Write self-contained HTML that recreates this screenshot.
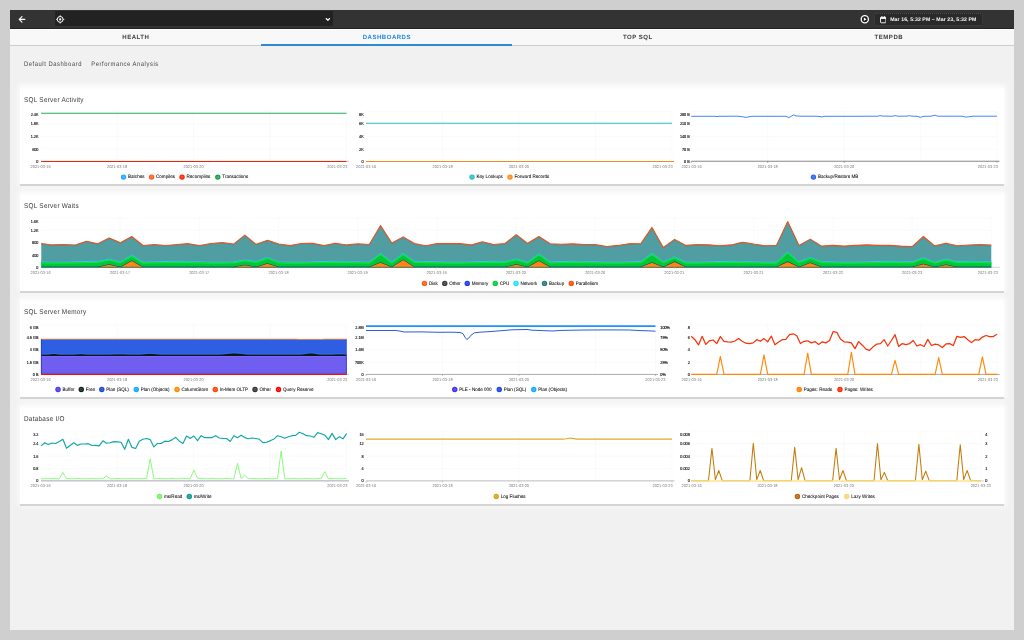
<!DOCTYPE html><html lang="en"><head><meta charset="utf-8"><title>SQL Server Dashboards</title><style>
*{box-sizing:border-box;text-rendering:geometricPrecision}
html,body{margin:0;padding:0}
body{width:1024px;height:640px;overflow:hidden;background:#cfcfcf;font-family:"Liberation Sans", Arial, sans-serif;position:relative}
#app{position:absolute;left:10px;top:10px;width:1004px;height:620px;background:#f1f1f1;overflow:hidden;will-change:transform}
#bar{position:absolute;left:0;top:0;width:1004px;height:18.6px;background:#333;border-bottom:1px solid #242424}
#sel{position:absolute;left:45px;top:.8px;width:278px;height:15.4px;background:#222}
#date{position:absolute;left:864.2px;top:2.8px;width:108.8px;height:13.2px;background:#2a2a2a;border:.5px dotted #4a4a4a;border-radius:2px;color:#fff;font-size:5.2px;font-weight:bold;line-height:12.6px;padding-left:15px;white-space:nowrap;letter-spacing:.08px}
#tabs{position:absolute;left:0;top:18.6px;width:1004px;height:17.2px;background:#f8f8f8;border-top:1.3px solid #fff;border-bottom:1px solid #cdcdcd;display:flex}
#tabs div{width:251px;text-align:center;font-size:6.05px;font-weight:bold;letter-spacing:.5px;color:#404040;line-height:16.6px;padding-left:.7px}
#tabs div.on{color:#1e88e5}
#ul{position:absolute;left:251px;top:33.8px;width:251px;height:2.3px;background:#2f8ad6}
#sub{position:absolute;left:14px;top:49.6px;font-size:6.5px;color:#484848;letter-spacing:.6px;white-space:nowrap;line-height:9px;transform:scaleX(.9);transform-origin:0 50%}
#sub span{margin-right:10.4px}
.panel{position:absolute;left:10px;width:984px;height:98.7px;background:linear-gradient(#f9f9f9,#fff 4px);box-shadow:0 1.6px .5px rgba(0,0,0,.15),0 0 5px 2.5px rgba(255,255,255,.8)}
.panel h3{position:absolute;left:4px;top:10.1px;margin:0;font-size:7px;font-weight:normal;color:#383838;letter-spacing:.3px;line-height:9px;white-space:nowrap;transform:scaleX(.91);transform-origin:0 50%}
.panel svg{position:absolute;left:0;top:0;overflow:visible}
svg text{font-family:"Liberation Sans", Arial, sans-serif}
.yl{font-size:4.35px;fill:#000;stroke:#000;stroke-width:.12px}
.xl{font-size:4.15px;fill:#7a7a7a}
.lg{font-size:4.9px;fill:#000;stroke:#000;stroke-width:.05px}
.g{stroke:#f5f5f5;stroke-width:.5}
</style></head><body>
<div id="app">
<div id="bar"><div id="sel"></div>
<svg style="position:absolute;left:0;top:0" width="1004" height="18" viewBox="10 10 1004 18"><path d="M24.8 19.4H19.5M22 16.6L19.2 19.4L22 22.2" fill="none" stroke="#fff" stroke-width="1.15" stroke-linecap="round" stroke-linejoin="round"/><circle cx="60.2" cy="19.4" r="2.9" fill="none" stroke="#fff" stroke-width="1"/><circle cx="60.2" cy="19.4" r="1.15" fill="#fff"/><path d="M60.2 15.3v1.4M60.2 22.1v1.4M56.1 19.4h1.4M62.9 19.4h1.4" stroke="#fff" stroke-width=".9"/><path d="M326.2 18.5L327.9 20.3L329.6 18.5" fill="none" stroke="#fff" stroke-width="1.1" stroke-linecap="round" stroke-linejoin="round"/><circle cx="864.8" cy="19.3" r="3.6" fill="#161616" stroke="#fff" stroke-width="1.3"/><path d="M863.8 17.5L866.6 19.3L863.8 21.1Z" fill="#fff"/></svg>
<div id="date">Mar 16, 5:32 PM &ndash; Mar 23, 5:32 PM<svg style="position:absolute;left:4.6px;top:2.5px" width="6.4" height="7.4" viewBox="0 0 6.4 7.4"><rect x=".5" y="1.2" width="5.4" height="5.6" rx=".7" fill="none" stroke="#fff" stroke-width=".9"/><rect x=".5" y="1.2" width="5.4" height="1.7" fill="#fff"/><path d="M1.9 .2v1.4M4.5 .2v1.4" stroke="#fff" stroke-width=".8"/></svg></div>
</div>
<div id="tabs"><div>HEALTH</div><div class="on">DASHBOARDS</div><div>TOP SQL</div><div>TEMPDB</div></div><div id="ul"></div>
<div id="sub"><span>Default Dashboard</span><span>Performance Analysis</span></div>
<div class="panel" style="top:76px;height:98.2px"><h3>SQL Server Activity</h3>
<svg width="984" height="98.2" viewBox="20 86 984 98.2"><line class="g" x1="41" x2="346.5" y1="124" y2="124"/><line class="g" x1="41" x2="346.5" y1="136.5" y2="136.5"/><line class="g" x1="41" x2="346.5" y1="149" y2="149"/><line class="g" x1="41" x2="346.5" y1="111.6" y2="111.6"/><line class="g" x1="117" x2="117" y1="111" y2="161.25"/><line class="g" x1="193.5" x2="193.5" y1="111" y2="161.25"/><line class="g" x1="270" x2="270" y1="111" y2="161.25"/><line class="g" x1="346.5" x2="346.5" y1="111" y2="161.25"/><line x1="41" x2="349" y1="161.25" y2="161.25" stroke="#aaa" stroke-width="0.6"/><text class="yl" transform="translate(38.4 116.15) scale(0.87 1)" text-anchor="end">2.4K</text><text class="yl" transform="translate(38.4 125.35) scale(0.87 1)" text-anchor="end">1.8K</text><text class="yl" transform="translate(38.4 138.05) scale(0.87 1)" text-anchor="end">1.2K</text><text class="yl" transform="translate(38.4 150.75) scale(0.87 1)" text-anchor="end">600</text><text class="yl" transform="translate(38.4 162.75) scale(0.87 1)" text-anchor="end">0</text><polyline fill="none" stroke="#22ae5c" stroke-width="1.1" stroke-linejoin="round"  points="41,113.2 346.5,113.2"/><polyline fill="none" stroke="#e9260c" stroke-width="1.1" stroke-linejoin="round"  points="41,161.45 346.5,161.45"/><text class="xl" transform="translate(30.5 167.75) scale(0.95 1)" text-anchor="start">2021-03-16</text><text class="xl" transform="translate(117 167.75) scale(0.95 1)" text-anchor="middle">2021-03-18</text><text class="xl" transform="translate(193.5 167.75) scale(0.95 1)" text-anchor="middle">2021-03-20</text><text class="xl" transform="translate(347.3 167.75) scale(0.95 1)" text-anchor="end">2021-03-23</text><circle cx="123.5" cy="177.1" r="2.7" fill="#1fa8fc"/><circle cx="123.5" cy="177.1" r="1.05" fill="none" stroke="#fff" stroke-opacity=".35" stroke-width=".6"/><text class="lg" transform="translate(128 178.35) scale(0.93 1)" text-anchor="start">Batches</text><circle cx="151.5" cy="177.1" r="2.7" fill="#ff5a1c"/><circle cx="151.5" cy="177.1" r="1.05" fill="none" stroke="#fff" stroke-opacity=".35" stroke-width=".6"/><text class="lg" transform="translate(156 178.35) scale(0.93 1)" text-anchor="start">Compiles</text><circle cx="182" cy="177.1" r="2.7" fill="#ff2200"/><circle cx="182" cy="177.1" r="1.05" fill="none" stroke="#fff" stroke-opacity=".35" stroke-width=".6"/><text class="lg" transform="translate(186.5 178.35) scale(0.93 1)" text-anchor="start">Recompiles</text><circle cx="217.75" cy="177.1" r="2.7" fill="#1a9e4c"/><circle cx="217.75" cy="177.1" r="1.05" fill="none" stroke="#fff" stroke-opacity=".35" stroke-width=".6"/><text class="lg" transform="translate(222.25 178.35) scale(0.93 1)" text-anchor="start">Transactions</text><line class="g" x1="366" x2="672" y1="124" y2="124"/><line class="g" x1="366" x2="672" y1="136.5" y2="136.5"/><line class="g" x1="366" x2="672" y1="149" y2="149"/><line class="g" x1="366" x2="672" y1="111.6" y2="111.6"/><line class="g" x1="442.5" x2="442.5" y1="111" y2="161.25"/><line class="g" x1="519" x2="519" y1="111" y2="161.25"/><line class="g" x1="595.5" x2="595.5" y1="111" y2="161.25"/><line class="g" x1="672" x2="672" y1="111" y2="161.25"/><text class="yl" transform="translate(363.7 116.25) scale(0.87 1)" text-anchor="end">8K</text><text class="yl" transform="translate(363.7 125.15) scale(0.87 1)" text-anchor="end">6K</text><text class="yl" transform="translate(363.7 138.05) scale(0.87 1)" text-anchor="end">4K</text><text class="yl" transform="translate(363.7 150.75) scale(0.87 1)" text-anchor="end">2K</text><text class="yl" transform="translate(363.7 162.75) scale(0.87 1)" text-anchor="end">0</text><polyline fill="none" stroke="#20bfc0" stroke-width="1.1" stroke-linejoin="round"  points="366,123.2 672,123.2"/><polyline fill="none" stroke="#f08a24" stroke-width="1.05" stroke-linejoin="round"  points="366,161.45 674,161.45"/><text class="xl" transform="translate(356 167.75) scale(0.95 1)" text-anchor="start">2021-03-16</text><text class="xl" transform="translate(442.5 167.75) scale(0.95 1)" text-anchor="middle">2021-03-18</text><text class="xl" transform="translate(519 167.75) scale(0.95 1)" text-anchor="middle">2021-03-20</text><text class="xl" transform="translate(672.6 167.75) scale(0.95 1)" text-anchor="end">2021-03-23</text><circle cx="472" cy="177.1" r="2.7" fill="#25c0c4"/><circle cx="472" cy="177.1" r="1.05" fill="none" stroke="#fff" stroke-opacity=".35" stroke-width=".6"/><text class="lg" transform="translate(476.5 178.35) scale(0.93 1)" text-anchor="start">Key Lookups</text><circle cx="510" cy="177.1" r="2.7" fill="#ff8c1a"/><circle cx="510" cy="177.1" r="1.05" fill="none" stroke="#fff" stroke-opacity=".35" stroke-width=".6"/><text class="lg" transform="translate(514.5 178.35) scale(0.93 1)" text-anchor="start">Forward Records</text><line class="g" x1="691.25" x2="997" y1="124" y2="124"/><line class="g" x1="691.25" x2="997" y1="136.5" y2="136.5"/><line class="g" x1="691.25" x2="997" y1="149" y2="149"/><line class="g" x1="691.25" x2="997" y1="111.6" y2="111.6"/><line class="g" x1="767.75" x2="767.75" y1="111" y2="161.25"/><line class="g" x1="844.25" x2="844.25" y1="111" y2="161.25"/><line class="g" x1="920.75" x2="920.75" y1="111" y2="161.25"/><line class="g" x1="997" x2="997" y1="111" y2="161.25"/><line x1="691.25" x2="999.5" y1="161.25" y2="161.25" stroke="#555" stroke-width="0.7"/><line x1="691.25" x2="691.25" y1="161.25" y2="162.85" stroke="#555" stroke-width=".5"/><line x1="767.75" x2="767.75" y1="161.25" y2="162.85" stroke="#555" stroke-width=".5"/><line x1="844.25" x2="844.25" y1="161.25" y2="162.85" stroke="#555" stroke-width=".5"/><line x1="997" x2="997" y1="161.25" y2="162.85" stroke="#555" stroke-width=".5"/><text class="yl" transform="translate(689.8 116.25) scale(0.87 1)" text-anchor="end">280 B</text><text class="yl" transform="translate(689.8 125.35) scale(0.87 1)" text-anchor="end">210 B</text><text class="yl" transform="translate(689.8 138.05) scale(0.87 1)" text-anchor="end">140 B</text><text class="yl" transform="translate(689.8 150.75) scale(0.87 1)" text-anchor="end">70 B</text><text class="yl" transform="translate(689.8 162.75) scale(0.87 1)" text-anchor="end">0 B</text><polyline fill="none" stroke="#4285f4" stroke-width="1.0" stroke-linejoin="round"  points="691.25,116.3 715,116.3 717,116.6 719,116.3 738,116.2 744,117 746,117.4 748,117 752,116.3 786,116.3 789,117.6 791.5,116.2 793.5,114.9 796,115.9 800,116.2 818,116.3 822,116.9 825,116.3 860,116.3 878,116.2 880,115.6 883,116.1 893,116.2 895,115.6 898,116.2 906,116.2 909.5,115.7 912,116.2 917,116.3 920.5,117.3 924,116.3 931,116.2 935,115.2 938,116.2 962,116.2 966,117.1 969,116.8 973,116.2 997,116.2"/><text class="xl" transform="translate(681.5 167.75) scale(0.95 1)" text-anchor="start">2021-03-16</text><text class="xl" transform="translate(767.75 167.75) scale(0.95 1)" text-anchor="middle">2021-03-18</text><text class="xl" transform="translate(844.25 167.75) scale(0.95 1)" text-anchor="middle">2021-03-20</text><text class="xl" transform="translate(998 167.75) scale(0.95 1)" text-anchor="end">2021-03-23</text><circle cx="813.5" cy="177.1" r="2.7" fill="#2a63f6"/><circle cx="813.5" cy="177.1" r="1.05" fill="none" stroke="#fff" stroke-opacity=".35" stroke-width=".6"/><text class="lg" transform="translate(818 178.35) scale(0.93 1)" text-anchor="start">Backup/Restore MB</text></svg></div>
<div class="panel" style="top:182.2px;height:98.6px"><h3>SQL Server Waits</h3>
<svg width="984" height="98.6" viewBox="20 192.2 984 98.6"><line class="g" x1="41.25" x2="991.3" y1="230.5" y2="230.5"/><line class="g" x1="41.25" x2="991.3" y1="243" y2="243"/><line class="g" x1="41.25" x2="991.3" y1="255.5" y2="255.5"/><line class="g" x1="41.25" x2="991.3" y1="218" y2="218"/><line class="g" x1="120" x2="120" y1="217.5" y2="267.5"/><line class="g" x1="199.2" x2="199.2" y1="217.5" y2="267.5"/><line class="g" x1="278.5" x2="278.5" y1="217.5" y2="267.5"/><line class="g" x1="357.7" x2="357.7" y1="217.5" y2="267.5"/><line class="g" x1="436.9" x2="436.9" y1="217.5" y2="267.5"/><line class="g" x1="516.1" x2="516.1" y1="217.5" y2="267.5"/><line class="g" x1="595.3" x2="595.3" y1="217.5" y2="267.5"/><line class="g" x1="674.5" x2="674.5" y1="217.5" y2="267.5"/><line class="g" x1="753.7" x2="753.7" y1="217.5" y2="267.5"/><line class="g" x1="833" x2="833" y1="217.5" y2="267.5"/><line class="g" x1="912.2" x2="912.2" y1="217.5" y2="267.5"/><line class="g" x1="991.3" x2="991.3" y1="217.5" y2="267.5"/><line x1="41.25" x2="1000" y1="267.5" y2="267.5" stroke="#bbb" stroke-width="0.6"/><text class="yl" transform="translate(38.4 223.05) scale(0.87 1)" text-anchor="end">1.6K</text><text class="yl" transform="translate(38.4 232.15) scale(0.87 1)" text-anchor="end">1.2K</text><text class="yl" transform="translate(38.4 244.55) scale(0.87 1)" text-anchor="end">800</text><text class="yl" transform="translate(38.4 257.05) scale(0.87 1)" text-anchor="end">400</text><text class="yl" transform="translate(38.4 268.95) scale(0.87 1)" text-anchor="end">0</text><polygon fill="#509ea1" points="41.25,243.6 52.56,245 63.87,244.7 75.18,245.2 86.49,241.25 97.8,243.9 109.11,238 120.42,242.8 131.73,236.6 143.04,245.6 154.35,244.7 165.66,245.6 176.97,244.7 188.28,243.75 199.59,245.7 210.9,243.6 222.21,242.7 233.52,244.2 244.83,235.3 256.14,244.4 267.45,240.3 278.76,244.2 290.07,245.5 301.38,243.6 312.69,243.4 324,245.6 335.31,243.4 346.62,245 357.93,243.9 369.24,244.7 380.55,225.6 391.86,243.1 403.17,237 414.48,243.6 425.79,245.9 437.1,243.6 448.41,243.75 459.72,243.75 471.03,245 482.34,241.9 493.65,244.7 504.96,243.6 516.27,234.8 527.59,243.4 538.9,236.6 550.21,243.9 561.52,244.4 572.83,244 584.14,244.7 595.45,244.7 606.76,246.6 618.07,245.5 629.38,243.75 640.69,243.9 652,227.5 663.31,247.5 674.62,239.5 685.93,245.5 697.24,244.7 708.55,245 719.86,245.8 731.17,245 742.48,242.3 753.79,244.2 765.1,245.8 776.41,245.5 787.72,221.6 799.03,245.5 810.34,239.2 821.65,246.25 832.96,245.5 844.27,246.25 855.58,245.5 866.89,245 878.2,245.5 889.51,245.5 900.82,246.25 912.13,246.7 923.44,236.6 934.75,245.9 946.06,243.4 957.37,245.9 968.68,245.2 979.99,244.7 991.3,245.2 991.3,267.5 41.25,267.5"/><polygon fill="#19e0d8" points="41.25,261.4 52.56,261.67 63.87,261.74 75.18,261.55 86.49,261.25 97.8,261.06 109.11,258.75 120.42,261.41 131.73,254.8 143.04,261.74 154.35,261.54 165.66,261.24 176.97,261.06 188.28,261.13 199.59,261.41 210.9,261.68 222.21,261.74 233.52,261.54 244.83,259.5 256.14,261.06 267.45,256.9 278.76,261.42 290.07,261.68 301.38,261.74 312.69,261.53 324,261.23 335.31,261.05 346.62,261.14 357.93,261.42 369.24,261.69 380.55,253 391.86,261.53 403.17,253 414.48,261.05 425.79,261.15 437.1,261.43 448.41,261.69 459.72,261.73 471.03,261.52 482.34,261.22 493.65,261.05 504.96,261.15 516.27,258.4 527.59,261.69 538.9,253.3 550.21,261.52 561.52,261.21 572.83,261.05 584.14,261.15 595.45,261.44 606.76,261.7 618.07,261.73 629.38,261.51 640.69,261.21 652,253 663.31,261.16 674.62,256.4 685.93,261.7 697.24,261.73 708.55,261.51 719.86,261.2 731.17,261.05 742.48,261.16 753.79,261.45 765.1,261.7 776.41,261.72 787.72,251.4 799.03,261.2 810.34,256.9 821.65,261.17 832.96,261.46 844.27,261.71 855.58,261.72 866.89,261.49 878.2,261.19 889.51,261.05 900.82,261.17 912.13,261.46 923.44,257.2 934.75,261.72 946.06,258.75 957.37,261.19 968.68,261.05 979.99,261.17 991.3,261.47 991.3,267.5 41.25,267.5"/><polygon fill="#00c736" points="41.25,262.3 52.56,262.57 63.87,262.64 75.18,262.45 86.49,262.15 97.8,261.96 109.11,259.65 120.42,262.31 131.73,255.7 143.04,262.64 154.35,262.44 165.66,262.14 176.97,261.96 188.28,262.03 199.59,262.31 210.9,262.58 222.21,262.64 233.52,262.44 244.83,260.4 256.14,261.96 267.45,257.8 278.76,262.32 290.07,262.58 301.38,262.64 312.69,262.43 324,262.13 335.31,261.95 346.62,262.04 357.93,262.32 369.24,262.59 380.55,253.9 391.86,262.43 403.17,253.9 414.48,261.95 425.79,262.05 437.1,262.33 448.41,262.59 459.72,262.63 471.03,262.42 482.34,262.12 493.65,261.95 504.96,262.05 516.27,259.3 527.59,262.59 538.9,254.2 550.21,262.42 561.52,262.11 572.83,261.95 584.14,262.05 595.45,262.34 606.76,262.6 618.07,262.63 629.38,262.41 640.69,262.11 652,253.9 663.31,262.06 674.62,257.3 685.93,262.6 697.24,262.63 708.55,262.41 719.86,262.1 731.17,261.95 742.48,262.06 753.79,262.35 765.1,262.6 776.41,262.62 787.72,252.3 799.03,262.1 810.34,257.8 821.65,262.07 832.96,262.36 844.27,262.61 855.58,262.62 866.89,262.39 878.2,262.09 889.51,261.95 900.82,262.07 912.13,262.36 923.44,258.1 934.75,262.62 946.06,259.65 957.37,262.09 968.68,261.95 979.99,262.07 991.3,262.37 991.3,267.5 41.25,267.5"/><polyline fill="none" stroke="#12de52" stroke-width="1.3" stroke-linejoin="round"  points="41.25,263 52.56,263.27 63.87,263.34 75.18,263.15 86.49,262.85 97.8,262.66 109.11,260.35 120.42,263.01 131.73,256.4 143.04,263.34 154.35,263.14 165.66,262.84 176.97,262.66 188.28,262.73 199.59,263.01 210.9,263.28 222.21,263.34 233.52,263.14 244.83,261.1 256.14,262.66 267.45,258.5 278.76,263.02 290.07,263.28 301.38,263.34 312.69,263.13 324,262.83 335.31,262.65 346.62,262.74 357.93,263.02 369.24,263.29 380.55,254.6 391.86,263.13 403.17,254.6 414.48,262.65 425.79,262.75 437.1,263.03 448.41,263.29 459.72,263.33 471.03,263.12 482.34,262.82 493.65,262.65 504.96,262.75 516.27,260 527.59,263.29 538.9,254.9 550.21,263.12 561.52,262.81 572.83,262.65 584.14,262.75 595.45,263.04 606.76,263.3 618.07,263.33 629.38,263.11 640.69,262.81 652,254.6 663.31,262.76 674.62,258 685.93,263.3 697.24,263.33 708.55,263.11 719.86,262.8 731.17,262.65 742.48,262.76 753.79,263.05 765.1,263.3 776.41,263.32 787.72,253 799.03,262.8 810.34,258.5 821.65,262.77 832.96,263.06 844.27,263.31 855.58,263.32 866.89,263.09 878.2,262.79 889.51,262.65 900.82,262.77 912.13,263.06 923.44,258.8 934.75,263.32 946.06,260.35 957.37,262.79 968.68,262.65 979.99,262.77 991.3,263.07"/><polygon fill="#16307a" points="41.25,266.95 52.56,266.95 63.87,266.95 75.18,266.95 86.49,266.95 97.8,266.95 109.11,264.35 120.42,266.95 131.73,260.75 143.04,266.95 154.35,266.95 165.66,266.95 176.97,266.95 188.28,266.95 199.59,266.95 210.9,266.95 222.21,266.95 233.52,266.95 244.83,264.95 256.14,266.95 267.45,263.45 278.76,266.95 290.07,266.95 301.38,266.95 312.69,266.95 324,266.95 335.31,266.95 346.62,266.95 357.93,266.95 369.24,266.95 380.55,262.35 391.86,266.95 403.17,259.65 414.48,266.95 425.79,266.95 437.1,266.95 448.41,266.95 459.72,266.95 471.03,266.95 482.34,266.95 493.65,266.95 504.96,266.95 516.27,264.35 527.59,266.95 538.9,260.75 550.21,266.95 561.52,266.95 572.83,266.95 584.14,266.95 595.45,266.95 606.76,266.95 618.07,266.95 629.38,266.95 640.69,266.95 652,262.35 663.31,266.95 674.62,261.55 685.93,266.95 697.24,266.95 708.55,266.95 719.86,266.95 731.17,266.95 742.48,266.95 753.79,266.95 765.1,266.95 776.41,266.95 787.72,261.55 799.03,266.95 810.34,262.75 821.65,266.95 832.96,266.95 844.27,266.95 855.58,266.95 866.89,266.95 878.2,266.95 889.51,266.95 900.82,266.95 912.13,266.95 923.44,263.85 934.75,266.95 946.06,264.65 957.37,266.95 968.68,266.95 979.99,266.95 991.3,266.95 991.3,267.5 41.25,267.5"/><polygon fill="#ff8412" points="41.25,267.5 52.56,267.5 63.87,267.5 75.18,267.5 86.49,267.5 97.8,267.5 109.11,264.9 120.42,267.5 131.73,261.3 143.04,267.5 154.35,267.5 165.66,267.5 176.97,267.5 188.28,267.5 199.59,267.5 210.9,267.5 222.21,267.5 233.52,267.5 244.83,265.5 256.14,267.5 267.45,264 278.76,267.5 290.07,267.5 301.38,267.5 312.69,267.5 324,267.5 335.31,267.5 346.62,267.5 357.93,267.5 369.24,267.5 380.55,262.9 391.86,267.5 403.17,260.2 414.48,267.5 425.79,267.5 437.1,267.5 448.41,267.5 459.72,267.5 471.03,267.5 482.34,267.5 493.65,267.5 504.96,267.5 516.27,264.9 527.59,267.5 538.9,261.3 550.21,267.5 561.52,267.5 572.83,267.5 584.14,267.5 595.45,267.5 606.76,267.5 618.07,267.5 629.38,267.5 640.69,267.5 652,262.9 663.31,267.5 674.62,262.1 685.93,267.5 697.24,267.5 708.55,267.5 719.86,267.5 731.17,267.5 742.48,267.5 753.79,267.5 765.1,267.5 776.41,267.5 787.72,262.1 799.03,267.5 810.34,263.3 821.65,267.5 832.96,267.5 844.27,267.5 855.58,267.5 866.89,267.5 878.2,267.5 889.51,267.5 900.82,267.5 912.13,267.5 923.44,264.4 934.75,267.5 946.06,265.2 957.37,267.5 968.68,267.5 979.99,267.5 991.3,267.5 991.3,267.5 41.25,267.5"/><polyline fill="none" stroke="#3d97a3" stroke-width="0.7" stroke-linejoin="round"  points="41.25,244.55 52.56,245.95 63.87,245.65 75.18,246.15 86.49,242.2 97.8,244.85 109.11,238.95 120.42,243.75 131.73,237.55 143.04,246.55 154.35,245.65 165.66,246.55 176.97,245.65 188.28,244.7 199.59,246.65 210.9,244.55 222.21,243.65 233.52,245.15 244.83,236.25 256.14,245.35 267.45,241.25 278.76,245.15 290.07,246.45 301.38,244.55 312.69,244.35 324,246.55 335.31,244.35 346.62,245.95 357.93,244.85 369.24,245.65 380.55,226.55 391.86,244.05 403.17,237.95 414.48,244.55 425.79,246.85 437.1,244.55 448.41,244.7 459.72,244.7 471.03,245.95 482.34,242.85 493.65,245.65 504.96,244.55 516.27,235.75 527.59,244.35 538.9,237.55 550.21,244.85 561.52,245.35 572.83,244.95 584.14,245.65 595.45,245.65 606.76,247.55 618.07,246.45 629.38,244.7 640.69,244.85 652,228.45 663.31,248.45 674.62,240.45 685.93,246.45 697.24,245.65 708.55,245.95 719.86,246.75 731.17,245.95 742.48,243.25 753.79,245.15 765.1,246.75 776.41,246.45 787.72,222.55 799.03,246.45 810.34,240.15 821.65,247.2 832.96,246.45 844.27,247.2 855.58,246.45 866.89,245.95 878.2,246.45 889.51,246.45 900.82,247.2 912.13,247.65 923.44,237.55 934.75,246.85 946.06,244.35 957.37,246.85 968.68,246.15 979.99,245.65 991.3,246.15"/><polyline fill="none" stroke="#f4501a" stroke-width="1.05" stroke-linejoin="round"  points="41.25,243.7 52.56,245.1 63.87,244.8 75.18,245.3 86.49,241.35 97.8,244 109.11,238.1 120.42,242.9 131.73,236.7 143.04,245.7 154.35,244.8 165.66,245.7 176.97,244.8 188.28,243.85 199.59,245.8 210.9,243.7 222.21,242.8 233.52,244.3 244.83,235.4 256.14,244.5 267.45,240.4 278.76,244.3 290.07,245.6 301.38,243.7 312.69,243.5 324,245.7 335.31,243.5 346.62,245.1 357.93,244 369.24,244.8 380.55,225.7 391.86,243.2 403.17,237.1 414.48,243.7 425.79,246 437.1,243.7 448.41,243.85 459.72,243.85 471.03,245.1 482.34,242 493.65,244.8 504.96,243.7 516.27,234.9 527.59,243.5 538.9,236.7 550.21,244 561.52,244.5 572.83,244.1 584.14,244.8 595.45,244.8 606.76,246.7 618.07,245.6 629.38,243.85 640.69,244 652,227.6 663.31,247.6 674.62,239.6 685.93,245.6 697.24,244.8 708.55,245.1 719.86,245.9 731.17,245.1 742.48,242.4 753.79,244.3 765.1,245.9 776.41,245.6 787.72,221.7 799.03,245.6 810.34,239.3 821.65,246.35 832.96,245.6 844.27,246.35 855.58,245.6 866.89,245.1 878.2,245.6 889.51,245.6 900.82,246.35 912.13,246.8 923.44,236.7 934.75,246 946.06,243.5 957.37,246 968.68,245.3 979.99,244.8 991.3,245.3"/><polyline fill="none" stroke="#6d7fd6" stroke-width="0.45" stroke-linejoin="round"  points="41.25,261.2 52.56,261.47 63.87,261.54 75.18,261.35 86.49,261.05 97.8,260.86 109.11,258.55 120.42,261.21 131.73,254.6 143.04,261.54 154.35,261.34 165.66,261.04 176.97,260.86 188.28,260.93 199.59,261.21 210.9,261.48 222.21,261.54 233.52,261.34 244.83,259.3 256.14,260.86 267.45,256.7 278.76,261.22 290.07,261.48 301.38,261.54 312.69,261.33 324,261.03 335.31,260.85 346.62,260.94 357.93,261.22 369.24,261.49 380.55,252.8 391.86,261.33 403.17,252.8 414.48,260.85 425.79,260.95 437.1,261.23 448.41,261.49 459.72,261.53 471.03,261.32 482.34,261.02 493.65,260.85 504.96,260.95 516.27,258.2 527.59,261.49 538.9,253.1 550.21,261.32 561.52,261.01 572.83,260.85 584.14,260.95 595.45,261.24 606.76,261.5 618.07,261.53 629.38,261.31 640.69,261.01 652,252.8 663.31,260.96 674.62,256.2 685.93,261.5 697.24,261.53 708.55,261.31 719.86,261 731.17,260.85 742.48,260.96 753.79,261.25 765.1,261.5 776.41,261.52 787.72,251.2 799.03,261 810.34,256.7 821.65,260.97 832.96,261.26 844.27,261.51 855.58,261.52 866.89,261.29 878.2,260.99 889.51,260.85 900.82,260.97 912.13,261.26 923.44,257 934.75,261.52 946.06,258.55 957.37,260.99 968.68,260.85 979.99,260.97 991.3,261.27"/><polyline fill="none" stroke="#1b4a4a" stroke-width="0.45" stroke-linejoin="round"  points="41.25,267.45 991.3,267.45"/><line x1="120" x2="120" y1="267.5" y2="269.1" stroke="#bbb" stroke-width=".5"/><line x1="199.2" x2="199.2" y1="267.5" y2="269.1" stroke="#bbb" stroke-width=".5"/><line x1="278.5" x2="278.5" y1="267.5" y2="269.1" stroke="#bbb" stroke-width=".5"/><line x1="357.7" x2="357.7" y1="267.5" y2="269.1" stroke="#bbb" stroke-width=".5"/><line x1="436.9" x2="436.9" y1="267.5" y2="269.1" stroke="#bbb" stroke-width=".5"/><line x1="516.1" x2="516.1" y1="267.5" y2="269.1" stroke="#bbb" stroke-width=".5"/><line x1="595.3" x2="595.3" y1="267.5" y2="269.1" stroke="#bbb" stroke-width=".5"/><line x1="674.5" x2="674.5" y1="267.5" y2="269.1" stroke="#bbb" stroke-width=".5"/><line x1="753.7" x2="753.7" y1="267.5" y2="269.1" stroke="#bbb" stroke-width=".5"/><line x1="833" x2="833" y1="267.5" y2="269.1" stroke="#bbb" stroke-width=".5"/><line x1="912.2" x2="912.2" y1="267.5" y2="269.1" stroke="#bbb" stroke-width=".5"/><line x1="991.3" x2="991.3" y1="267.5" y2="269.1" stroke="#bbb" stroke-width=".5"/><text class="xl" transform="translate(30.5 273.85) scale(0.95 1)" text-anchor="start">2021-03-16</text><text class="xl" transform="translate(120 273.85) scale(0.95 1)" text-anchor="middle">2021-03-17</text><text class="xl" transform="translate(199.2 273.85) scale(0.95 1)" text-anchor="middle">2021-03-17</text><text class="xl" transform="translate(278.5 273.85) scale(0.95 1)" text-anchor="middle">2021-03-18</text><text class="xl" transform="translate(357.5 273.85) scale(0.95 1)" text-anchor="middle">2021-03-19</text><text class="xl" transform="translate(436.7 273.85) scale(0.95 1)" text-anchor="middle">2021-03-19</text><text class="xl" transform="translate(516 273.85) scale(0.95 1)" text-anchor="middle">2021-03-20</text><text class="xl" transform="translate(595.2 273.85) scale(0.95 1)" text-anchor="middle">2021-03-20</text><text class="xl" transform="translate(674.4 273.85) scale(0.95 1)" text-anchor="middle">2021-03-21</text><text class="xl" transform="translate(753.7 273.85) scale(0.95 1)" text-anchor="middle">2021-03-21</text><text class="xl" transform="translate(833 273.85) scale(0.95 1)" text-anchor="middle">2021-03-22</text><text class="xl" transform="translate(912.2 273.85) scale(0.95 1)" text-anchor="middle">2021-03-23</text><text class="xl" transform="translate(998 273.85) scale(0.95 1)" text-anchor="end">2021-03-23</text><circle cx="424.5" cy="283.6" r="2.7" fill="#ff5f0a"/><circle cx="424.5" cy="283.6" r="1.05" fill="none" stroke="#fff" stroke-opacity=".35" stroke-width=".6"/><text class="lg" transform="translate(429 284.85) scale(0.93 1)" text-anchor="start">Disk</text><circle cx="444.75" cy="283.6" r="2.7" fill="#3a3a3a"/><circle cx="444.75" cy="283.6" r="1.05" fill="none" stroke="#fff" stroke-opacity=".35" stroke-width=".6"/><text class="lg" transform="translate(449.25 284.85) scale(0.93 1)" text-anchor="start">Other</text><circle cx="467.25" cy="283.6" r="2.7" fill="#1a35e8"/><circle cx="467.25" cy="283.6" r="1.05" fill="none" stroke="#fff" stroke-opacity=".35" stroke-width=".6"/><text class="lg" transform="translate(471.75 284.85) scale(0.93 1)" text-anchor="start">Memory</text><circle cx="495.25" cy="283.6" r="2.7" fill="#00cc33"/><circle cx="495.25" cy="283.6" r="1.05" fill="none" stroke="#fff" stroke-opacity=".35" stroke-width=".6"/><text class="lg" transform="translate(499.75 284.85) scale(0.93 1)" text-anchor="start">CPU</text><circle cx="516" cy="283.6" r="2.7" fill="#19e6ff"/><circle cx="516" cy="283.6" r="1.05" fill="none" stroke="#fff" stroke-opacity=".35" stroke-width=".6"/><text class="lg" transform="translate(520.5 284.85) scale(0.93 1)" text-anchor="start">Network</text><circle cx="544.5" cy="283.6" r="2.7" fill="#2b7a80"/><circle cx="544.5" cy="283.6" r="1.05" fill="none" stroke="#fff" stroke-opacity=".35" stroke-width=".6"/><text class="lg" transform="translate(549 284.85) scale(0.93 1)" text-anchor="start">Backup</text><circle cx="571.25" cy="283.6" r="2.7" fill="#ff4a00"/><circle cx="571.25" cy="283.6" r="1.05" fill="none" stroke="#fff" stroke-opacity=".35" stroke-width=".6"/><text class="lg" transform="translate(575.75 284.85) scale(0.93 1)" text-anchor="start">Parallelism</text></svg></div>
<div class="panel" style="top:288.4px;height:98.9px"><h3>SQL Server Memory</h3>
<svg width="984" height="98.9" viewBox="20 298.4 984 98.9"><g transform="translate(0 0.6)"><line class="g" x1="41" x2="346.6" y1="324.9" y2="324.9"/><line class="g" x1="41" x2="346.6" y1="337.1" y2="337.1"/><line class="g" x1="41" x2="346.6" y1="349.5" y2="349.5"/><line class="g" x1="41" x2="346.6" y1="361.9" y2="361.9"/><line class="g" x1="117" x2="117" y1="324.5" y2="374.25"/><line class="g" x1="193.5" x2="193.5" y1="324.5" y2="374.25"/><line class="g" x1="270" x2="270" y1="324.5" y2="374.25"/><line class="g" x1="346.5" x2="346.5" y1="324.5" y2="374.25"/><text class="yl" transform="translate(38.4 329.15) scale(0.87 1)" text-anchor="end">6 GB</text><text class="yl" transform="translate(38.4 338.55) scale(0.87 1)" text-anchor="end">4.5 GB</text><text class="yl" transform="translate(38.4 351.05) scale(0.87 1)" text-anchor="end">3 GB</text><text class="yl" transform="translate(38.4 363.55) scale(0.87 1)" text-anchor="end">1.5 GB</text><text class="yl" transform="translate(38.4 375.75) scale(0.87 1)" text-anchor="end">0 B</text><polygon fill="#2e5ee2" points="41,339 44.64,339 48.28,339 51.91,339 55.55,339 59.19,339 62.83,339 66.47,339 70.1,339 73.74,339 77.38,339 81.02,339 84.66,339 88.3,339 91.93,339 95.57,339 99.21,339 102.85,339 106.49,339 110.12,339 113.76,339 117.4,339 121.04,339 124.68,339 128.31,339 131.95,339 135.59,339 139.23,339 142.87,339 146.5,339 150.14,339 153.78,339 157.42,339 161.06,339 164.7,339 168.33,339 171.97,339 175.61,339 179.25,339 182.89,339 186.52,339 190.16,339 193.8,339 197.44,339 201.08,339 204.71,339 208.35,339 211.99,339 215.63,339 219.27,339 222.9,339 226.54,339 230.18,339 233.82,339 237.46,339 241.1,339 244.73,339 248.37,339 252.01,339 255.65,339 259.29,339 262.92,339 266.56,339 270.2,339 273.84,339 277.48,339 281.11,339 284.75,339 288.39,339 292.03,339 295.67,339 299.3,339.25 302.94,339.25 306.58,339.25 310.22,339.25 313.86,339.25 317.5,339.25 321.13,339.25 324.77,339 328.41,339 332.05,339 335.69,339 339.32,339 342.96,339 346.6,339 346.6,374.25 41,374.25"/><polygon fill="#07190f" points="41,354.35 44.64,354.35 48.28,354.26 51.91,353.82 55.55,353.75 59.19,354.22 62.83,354.34 66.47,354.35 70.1,354.34 73.74,354.26 77.38,354.01 81.02,353.92 84.66,354.16 88.3,354.32 91.93,354.35 95.57,354.35 99.21,354.35 102.85,354.33 106.49,354.3 110.12,354.24 113.76,354.15 117.4,354.07 121.04,354.05 124.68,354.11 128.31,354.2 131.95,354.28 135.59,354.31 139.23,354.27 142.87,354.07 146.5,353.73 150.14,353.55 153.78,353.75 157.42,354.09 161.06,354.28 164.7,354.34 168.33,354.35 171.97,354.35 175.61,354.35 179.25,354.35 182.89,354.35 186.52,354.35 190.16,354.35 193.8,354.35 197.44,354.35 201.08,354.35 204.71,354.35 208.35,354.35 211.99,354.35 215.63,354.33 219.27,354.26 222.9,354.07 226.54,353.7 230.18,353.26 233.82,353.05 237.46,353.23 241.1,353.65 244.73,354.04 248.37,354.25 252.01,354.33 255.65,354.35 259.29,354.35 262.92,354.35 266.56,354.35 270.2,354.35 273.84,354.35 277.48,354.35 281.11,354.35 284.75,354.35 288.39,354.35 292.03,354.35 295.67,354.35 299.3,354.32 302.94,354.14 306.58,353.59 310.22,353.07 313.86,353.31 317.5,353.95 321.13,354.27 324.77,354.34 328.41,354.34 332.05,354.28 335.69,354.11 339.32,353.96 342.96,354.04 346.6,354.23 346.6,374.25 41,374.25"/><polygon fill="#705ef0" points="41,355.9 44.64,355.9 48.28,355.9 51.91,355.9 55.55,355.9 59.19,355.9 62.83,355.9 66.47,355.9 70.1,355.9 73.74,355.9 77.38,355.9 81.02,355.9 84.66,355.9 88.3,355.9 91.93,355.9 95.57,355.9 99.21,355.9 102.85,355.9 106.49,355.9 110.12,355.9 113.76,355.9 117.4,355.9 121.04,355.9 124.68,355.9 128.31,355.9 131.95,355.9 135.59,355.9 139.23,355.9 142.87,355.9 146.5,355.9 150.14,355.9 153.78,355.9 157.42,355.9 161.06,355.9 164.7,355.9 168.33,355.9 171.97,355.9 175.61,355.9 179.25,355.9 182.89,355.9 186.52,355.9 190.16,355.9 193.8,355.9 197.44,355.9 201.08,355.9 204.71,355.9 208.35,355.9 211.99,355.9 215.63,355.9 219.27,355.9 222.9,355.9 226.54,355.9 230.18,355.9 233.82,355.9 237.46,355.9 241.1,355.9 244.73,355.9 248.37,355.9 252.01,355.9 255.65,355.9 259.29,355.9 262.92,355.9 266.56,355.9 270.2,355.9 273.84,355.9 277.48,355.9 281.11,355.9 284.75,355.9 288.39,355.9 292.03,355.9 295.67,355.9 299.3,355.9 302.94,355.9 306.58,355.9 310.22,355.9 313.86,355.9 317.5,355.9 321.13,355.9 324.77,355.9 328.41,355.9 332.05,355.9 335.69,355.9 339.32,355.9 342.96,355.9 346.6,355.9 346.6,374.25 41,374.25"/><polyline fill="none" stroke="#3f6efc" stroke-width="0.6" stroke-linejoin="round"  points="41,354 44.64,354 48.28,353.91 51.91,353.47 55.55,353.4 59.19,353.87 62.83,353.99 66.47,354 70.1,353.99 73.74,353.91 77.38,353.66 81.02,353.57 84.66,353.81 88.3,353.97 91.93,354 95.57,354 99.21,354 102.85,353.98 106.49,353.95 110.12,353.89 113.76,353.8 117.4,353.72 121.04,353.7 124.68,353.76 128.31,353.85 131.95,353.93 135.59,353.96 139.23,353.92 142.87,353.72 146.5,353.38 150.14,353.2 153.78,353.4 157.42,353.74 161.06,353.93 164.7,353.99 168.33,354 171.97,354 175.61,354 179.25,354 182.89,354 186.52,354 190.16,354 193.8,354 197.44,354 201.08,354 204.71,354 208.35,354 211.99,354 215.63,353.98 219.27,353.91 222.9,353.72 226.54,353.35 230.18,352.91 233.82,352.7 237.46,352.88 241.1,353.3 244.73,353.69 248.37,353.9 252.01,353.98 255.65,354 259.29,354 262.92,354 266.56,354 270.2,354 273.84,354 277.48,354 281.11,354 284.75,354 288.39,354 292.03,354 295.67,354 299.3,353.97 302.94,353.79 306.58,353.24 310.22,352.72 313.86,352.96 317.5,353.6 321.13,353.92 324.77,353.99 328.41,353.99 332.05,353.93 335.69,353.76 339.32,353.61 342.96,353.69 346.6,353.88"/><polyline fill="none" stroke="#8b6efc" stroke-width="0.6" stroke-linejoin="round"  points="41,356.3 346.6,356.3"/><polyline fill="none" stroke="#3a62f2" stroke-width="0.8" stroke-linejoin="round"  points="41,373 346.6,373"/><polyline fill="none" stroke="#e0742a" stroke-width="0.8" stroke-linejoin="round"  points="41,339 44.64,339 48.28,339 51.91,339 55.55,339 59.19,339 62.83,339 66.47,339 70.1,339 73.74,339 77.38,339 81.02,339 84.66,339 88.3,339 91.93,339 95.57,339 99.21,339 102.85,339 106.49,339 110.12,339 113.76,339 117.4,339 121.04,339 124.68,339 128.31,339 131.95,339 135.59,339 139.23,339 142.87,339 146.5,339 150.14,339 153.78,339 157.42,339 161.06,339 164.7,339 168.33,339 171.97,339 175.61,339 179.25,339 182.89,339 186.52,339 190.16,339 193.8,339 197.44,339 201.08,339 204.71,339 208.35,339 211.99,339 215.63,339 219.27,339 222.9,339 226.54,339 230.18,339 233.82,339 237.46,339 241.1,339 244.73,339 248.37,339 252.01,339 255.65,339 259.29,339 262.92,339 266.56,339 270.2,339 273.84,339 277.48,339 281.11,339 284.75,339 288.39,339 292.03,339 295.67,339 299.3,339.25 302.94,339.25 306.58,339.25 310.22,339.25 313.86,339.25 317.5,339.25 321.13,339.25 324.77,339 328.41,339 332.05,339 335.69,339 339.32,339 342.96,339 346.6,339"/><polyline fill="none" stroke="#1530d8" stroke-width="0.7" stroke-linejoin="round"  points="41.3,339 41.3,374.25"/><polyline fill="none" stroke="#3a4ae6" stroke-width="0.6" stroke-linejoin="round"  points="346.3,339 346.3,374.25"/><polyline fill="none" stroke="#ff0a0a" stroke-width="1.3" stroke-linejoin="round"  points="41,374.25 346.6,374.25"/><line x1="346.6" x2="349" y1="374.25" y2="374.25" stroke="#999" stroke-width="0.5"/><text class="xl" transform="translate(30.5 380.55) scale(0.95 1)" text-anchor="start">2021-03-16</text><text class="xl" transform="translate(117 380.55) scale(0.95 1)" text-anchor="middle">2021-03-18</text><text class="xl" transform="translate(193.5 380.55) scale(0.95 1)" text-anchor="middle">2021-03-20</text><text class="xl" transform="translate(347.3 380.55) scale(0.95 1)" text-anchor="end">2021-03-23</text><circle cx="58" cy="389.25" r="2.7" fill="#4a35f0"/><circle cx="58" cy="389.25" r="1.05" fill="none" stroke="#fff" stroke-opacity=".35" stroke-width=".6"/><text class="lg" transform="translate(62.5 390.5) scale(0.93 1)" text-anchor="start">Buffer</text><circle cx="81.25" cy="389.25" r="2.7" fill="#0c2415"/><circle cx="81.25" cy="389.25" r="1.05" fill="none" stroke="#fff" stroke-opacity=".35" stroke-width=".6"/><text class="lg" transform="translate(85.75 390.5) scale(0.93 1)" text-anchor="start">Free</text><circle cx="101.75" cy="389.25" r="2.7" fill="#1a45e0"/><circle cx="101.75" cy="389.25" r="1.05" fill="none" stroke="#fff" stroke-opacity=".35" stroke-width=".6"/><text class="lg" transform="translate(106.25 390.5) scale(0.93 1)" text-anchor="start">Plan (SQL)</text><circle cx="136.25" cy="389.25" r="2.7" fill="#12aaff"/><circle cx="136.25" cy="389.25" r="1.05" fill="none" stroke="#fff" stroke-opacity=".35" stroke-width=".6"/><text class="lg" transform="translate(140.75 390.5) scale(0.93 1)" text-anchor="start">Plan (Objects)</text><circle cx="177" cy="389.25" r="2.7" fill="#ff8a00"/><circle cx="177" cy="389.25" r="1.05" fill="none" stroke="#fff" stroke-opacity=".35" stroke-width=".6"/><text class="lg" transform="translate(181.5 390.5) scale(0.93 1)" text-anchor="start">ColumnStore</text><circle cx="215.25" cy="389.25" r="2.7" fill="#ff4500"/><circle cx="215.25" cy="389.25" r="1.05" fill="none" stroke="#fff" stroke-opacity=".35" stroke-width=".6"/><text class="lg" transform="translate(219.75 390.5) scale(0.93 1)" text-anchor="start">In-Mem OLTP</text><circle cx="255" cy="389.25" r="2.7" fill="#333"/><circle cx="255" cy="389.25" r="1.05" fill="none" stroke="#fff" stroke-opacity=".35" stroke-width=".6"/><text class="lg" transform="translate(259.5 390.5) scale(0.93 1)" text-anchor="start">Other</text><circle cx="278.5" cy="389.25" r="2.7" fill="#ff0000"/><circle cx="278.5" cy="389.25" r="1.05" fill="none" stroke="#fff" stroke-opacity=".35" stroke-width=".6"/><text class="lg" transform="translate(283 390.5) scale(0.93 1)" text-anchor="start">Query Reserve</text><line class="g" x1="366" x2="655.5" y1="324.9" y2="324.9"/><line class="g" x1="366" x2="655.5" y1="337.1" y2="337.1"/><line class="g" x1="366" x2="655.5" y1="349.5" y2="349.5"/><line class="g" x1="366" x2="655.5" y1="361.9" y2="361.9"/><line class="g" x1="442.5" x2="442.5" y1="324.5" y2="374.25"/><line class="g" x1="519" x2="519" y1="324.5" y2="374.25"/><line class="g" x1="595.5" x2="595.5" y1="324.5" y2="374.25"/><line class="g" x1="655.5" x2="655.5" y1="324.5" y2="374.25"/><line x1="366" x2="658" y1="374.25" y2="374.25" stroke="#888" stroke-width="0.7"/><line x1="366" x2="366" y1="374.25" y2="375.85" stroke="#888" stroke-width=".5"/><line x1="442.5" x2="442.5" y1="374.25" y2="375.85" stroke="#888" stroke-width=".5"/><line x1="519" x2="519" y1="374.25" y2="375.85" stroke="#888" stroke-width=".5"/><line x1="655.5" x2="655.5" y1="374.25" y2="375.85" stroke="#888" stroke-width=".5"/><text class="yl" transform="translate(363.7 329.15) scale(0.87 1)" text-anchor="end">2.8M</text><text class="yl" transform="translate(363.7 338.55) scale(0.87 1)" text-anchor="end">2.1M</text><text class="yl" transform="translate(363.7 351.05) scale(0.87 1)" text-anchor="end">1.4M</text><text class="yl" transform="translate(363.7 363.55) scale(0.87 1)" text-anchor="end">700K</text><text class="yl" transform="translate(363.7 375.75) scale(0.87 1)" text-anchor="end">0</text><text class="yl" transform="translate(660.3 329.15) scale(0.87 1)" text-anchor="start">100%</text><text class="yl" transform="translate(660.3 338.55) scale(0.87 1)" text-anchor="start">75%</text><text class="yl" transform="translate(660.3 351.05) scale(0.87 1)" text-anchor="start">50%</text><text class="yl" transform="translate(660.3 363.55) scale(0.87 1)" text-anchor="start">25%</text><text class="yl" transform="translate(660.3 375.75) scale(0.87 1)" text-anchor="start">0%</text><polyline fill="none" stroke="#1e90ff" stroke-width="1.9" stroke-linejoin="round"  points="366,325.9 655.5,325.9"/><polyline fill="none" stroke="#2a5bd8" stroke-width="1.0" stroke-linejoin="round"  points="366,330.3 396,330.3 400,330.9 404,331.8 420,331.7 440,332.1 452,332 460,332.3 463,333.5 465,337 466.8,339.3 468.5,338.2 471,335 474.5,332.6 480,332 490,331.4 500,330.6 512,329.6 527,329.3 532,330 540,330.3 552,330.8 562,330.2 587,329.8 610,329.7 629.5,329.8 640,330.4 648,330.6 655.5,331"/><text class="xl" transform="translate(356 380.55) scale(0.95 1)" text-anchor="start">2021-03-16</text><text class="xl" transform="translate(442.5 380.55) scale(0.95 1)" text-anchor="middle">2021-03-18</text><text class="xl" transform="translate(519 380.55) scale(0.95 1)" text-anchor="middle">2021-03-20</text><text class="xl" transform="translate(655.4 380.55) scale(0.95 1)" text-anchor="middle">2021-03-23</text><circle cx="454.75" cy="389.25" r="2.7" fill="#3d2df5"/><circle cx="454.75" cy="389.25" r="1.05" fill="none" stroke="#fff" stroke-opacity=".35" stroke-width=".6"/><text class="lg" transform="translate(459.25 390.5) scale(0.93 1)" text-anchor="start">PLE - Node 000</text><circle cx="499.25" cy="389.25" r="2.7" fill="#1a45e0"/><circle cx="499.25" cy="389.25" r="1.05" fill="none" stroke="#fff" stroke-opacity=".35" stroke-width=".6"/><text class="lg" transform="translate(503.75 390.5) scale(0.93 1)" text-anchor="start">Plan (SQL)</text><circle cx="533.75" cy="389.25" r="2.7" fill="#12aaff"/><circle cx="533.75" cy="389.25" r="1.05" fill="none" stroke="#fff" stroke-opacity=".35" stroke-width=".6"/><text class="lg" transform="translate(538.25 390.5) scale(0.93 1)" text-anchor="start">Plan (Objects)</text><line class="g" x1="691.25" x2="997" y1="324.9" y2="324.9"/><line class="g" x1="691.25" x2="997" y1="337.1" y2="337.1"/><line class="g" x1="691.25" x2="997" y1="349.5" y2="349.5"/><line class="g" x1="691.25" x2="997" y1="361.9" y2="361.9"/><line class="g" x1="767.75" x2="767.75" y1="324.5" y2="374.25"/><line class="g" x1="844.25" x2="844.25" y1="324.5" y2="374.25"/><line class="g" x1="920.75" x2="920.75" y1="324.5" y2="374.25"/><line class="g" x1="997" x2="997" y1="324.5" y2="374.25"/><line x1="691.25" x2="999.7" y1="374.25" y2="374.25" stroke="#888" stroke-width="0.7"/><text class="yl" transform="translate(689.8 329.15) scale(0.87 1)" text-anchor="end">8</text><text class="yl" transform="translate(689.8 338.55) scale(0.87 1)" text-anchor="end">6</text><text class="yl" transform="translate(689.8 351.05) scale(0.87 1)" text-anchor="end">4</text><text class="yl" transform="translate(689.8 363.55) scale(0.87 1)" text-anchor="end">2</text><text class="yl" transform="translate(689.8 375.75) scale(0.87 1)" text-anchor="end">0</text><polyline fill="none" stroke="#f4350a" stroke-width="1.25" stroke-linejoin="round"  points="691.25,336.1 694.89,339.5 698.53,344.7 702.17,336.1 705.81,344.2 709.45,340.6 713.09,339.8 716.73,343.4 720.37,336.4 724.01,341.1 727.65,341.7 731.29,341.9 734.93,340.8 738.57,338.4 742.21,341.1 745.85,343 749.49,343.4 753.13,342.7 756.77,339.5 760.41,341.1 764.05,338.4 767.69,341.6 771.33,335.9 774.97,344.5 778.61,341.9 782.25,339.5 785.89,339.1 789.53,334.5 793.17,333.6 796.81,335.6 800.45,343.4 804.09,341.1 807.73,340.6 811.37,342.7 815.01,341.4 818.65,344.2 822.29,341.6 825.93,342.7 829.57,340.3 833.21,331.4 836.85,332.2 840.49,338.75 844.12,341.6 847.76,342 851.4,342.7 855.04,348.4 858.68,341.4 862.32,345 865.96,348.9 869.6,350.2 873.24,346.6 876.88,343.9 880.52,343.4 884.16,339.5 887.8,345.8 891.44,340.3 895.08,334.5 898.72,346.25 902.36,343.4 906,344.5 909.64,343.4 913.28,340.3 916.92,345.8 920.56,344.5 924.2,346.25 927.84,339.2 931.48,345.3 935.12,343.9 938.76,344.7 942.4,347.3 946.04,343.75 949.68,343.4 953.32,345.3 956.96,336.1 960.6,337.2 964.24,336.4 967.88,339.5 971.52,342.3 975.16,339.5 978.8,340 982.44,336.9 986.08,335.3 989.72,336.4 993.36,336.4 997,334"/><polyline fill="none" stroke="#ff8a0a" stroke-width="1.15" stroke-linejoin="round"  points="691.25,374.15 694.89,374.15 698.53,374.15 702.17,374.15 705.81,374.15 709.45,374.15 713.09,374.15 716.73,374.15 720.37,356.15 724.01,374.15 727.65,374.15 731.29,374.15 734.93,374.15 738.57,374.15 742.21,374.15 745.85,374.15 749.49,374.15 753.13,374.15 756.77,374.15 760.41,374.15 764.05,354.6 767.69,374.15 771.33,374.15 774.97,374.15 778.61,374.15 782.25,374.15 785.89,374.15 789.53,374.15 793.17,374.15 796.81,374.15 800.45,374.15 804.09,374.15 807.73,353 811.37,374.15 815.01,374.15 818.65,374.15 822.29,374.15 825.93,374.15 829.57,374.15 833.21,374.15 836.85,374.15 840.49,374.15 844.12,374.15 847.76,374.15 851.4,352.2 855.04,374.15 858.68,374.15 862.32,374.15 865.96,374.15 869.6,374.15 873.24,374.15 876.88,374.15 880.52,374.15 884.16,374.15 887.8,374.15 891.44,374.15 895.08,360.2 898.72,374.15 902.36,374.15 906,374.15 909.64,374.15 913.28,374.15 916.92,374.15 920.56,374.15 924.2,374.15 927.84,374.15 931.48,374.15 935.12,374.15 938.76,357.4 942.4,374.15 946.04,374.15 949.68,374.15 953.32,374.15 956.96,374.15 960.6,374.15 964.24,374.15 967.88,374.15 971.52,374.15 975.16,374.15 978.8,374.15 982.44,356.6 986.08,374.15 989.72,374.15 993.36,374.15 997,374.15"/><text class="xl" transform="translate(681.5 380.55) scale(0.95 1)" text-anchor="start">2021-03-16</text><text class="xl" transform="translate(767.75 380.55) scale(0.95 1)" text-anchor="middle">2021-03-18</text><text class="xl" transform="translate(844.25 380.55) scale(0.95 1)" text-anchor="middle">2021-03-20</text><text class="xl" transform="translate(998 380.55) scale(0.95 1)" text-anchor="end">2021-03-23</text><circle cx="799.25" cy="389.25" r="2.7" fill="#ff8000"/><circle cx="799.25" cy="389.25" r="1.05" fill="none" stroke="#fff" stroke-opacity=".35" stroke-width=".6"/><text class="lg" transform="translate(803.75 390.5) scale(0.93 1)" text-anchor="start">Pages: Reads</text><circle cx="840" cy="389.25" r="2.7" fill="#ff2800"/><circle cx="840" cy="389.25" r="1.05" fill="none" stroke="#fff" stroke-opacity=".35" stroke-width=".6"/><text class="lg" transform="translate(844.5 390.5) scale(0.93 1)" text-anchor="start">Pages: Writes</text></g></svg></div>
<div class="panel" style="top:394.9px;height:98.7px"><h3>Database I/O</h3>
<svg width="984" height="98.7" viewBox="20 404.9 984 98.7"><line class="g" x1="41" x2="346.6" y1="431.2" y2="431.2"/><line class="g" x1="41" x2="346.6" y1="443.5" y2="443.5"/><line class="g" x1="41" x2="346.6" y1="456" y2="456"/><line class="g" x1="41" x2="346.6" y1="468.4" y2="468.4"/><line class="g" x1="117" x2="117" y1="431" y2="480.8"/><line class="g" x1="193.5" x2="193.5" y1="431" y2="480.8"/><line class="g" x1="270" x2="270" y1="431" y2="480.8"/><line class="g" x1="346.5" x2="346.5" y1="431" y2="480.8"/><line x1="41" x2="349" y1="480.8" y2="480.8" stroke="#a9a3b4" stroke-width="1.0"/><text class="yl" transform="translate(38.4 435.85) scale(0.87 1)" text-anchor="end">3.2</text><text class="yl" transform="translate(38.4 445.05) scale(0.87 1)" text-anchor="end">2.4</text><text class="yl" transform="translate(38.4 457.55) scale(0.87 1)" text-anchor="end">1.6</text><text class="yl" transform="translate(38.4 469.85) scale(0.87 1)" text-anchor="end">0.8</text><text class="yl" transform="translate(38.4 482.15) scale(0.87 1)" text-anchor="end">0</text><polyline fill="none" stroke="#7dfb6e" stroke-width="0.9" stroke-linejoin="round"  points="41,478.6 44.64,478.75 48.28,478.56 51.91,478.46 55.55,478.67 59.19,478.72 62.83,472.3 66.47,478.51 70.1,478.73 73.74,478.66 77.38,478.46 81.02,478.58 84.66,478.75 88.3,478.58 91.93,478.45 95.57,478.65 99.21,478.73 102.85,478.51 106.49,475.9 110.12,478.72 113.76,478.68 117.4,478.46 121.04,478.56 124.68,478.75 128.31,478.61 131.95,478.45 135.59,478.63 139.23,478.74 142.87,478.53 146.5,478.48 150.14,458.7 153.78,478.7 157.42,478.47 161.06,478.53 164.7,478.74 168.33,478.63 171.97,478.45 175.61,478.61 179.25,478.75 182.89,478.55 186.52,478.47 190.16,478.68 193.8,470 197.44,478 201.08,478.52 204.71,478.73 208.35,478.65 211.99,478.45 215.63,478.59 219.27,478.75 222.9,478.57 226.54,478.46 230.18,478.66 233.82,478.73 237.46,463.25 241.1,478.5 244.73,475.1 248.37,478.67 252.01,478.46 255.65,478.57 259.29,478.75 262.92,478.6 266.56,478.45 270.2,478.64 273.84,478.74 277.48,478.52 281.11,450.9 284.75,478.71 288.39,478.69 292.03,478.47 295.67,478.54 299.3,478.75 302.94,478.62 306.58,478.45 310.22,478.62 313.86,478.74 317.5,478.54 321.13,478.47 324.77,471.5 328.41,478.71 332.05,478.48 335.69,478.52 339.32,478.74 342.96,478.64 346.6,478.45"/><polyline fill="none" stroke="#11a6a6" stroke-width="1.15" stroke-linejoin="round"  points="41,445.75 44.64,442.6 48.28,444.5 51.91,442.9 55.55,443.4 59.19,441.4 62.83,439.2 66.47,448.1 70.1,445.4 73.74,442.6 77.38,445.3 81.02,443.9 84.66,443.9 88.3,443.6 91.93,445.4 95.57,445.3 99.21,445.75 102.85,440.75 106.49,443.1 110.12,442.6 113.76,441.5 117.4,441.8 121.04,442.2 124.68,449.2 128.31,439.2 131.95,447.3 135.59,448.4 139.23,441.1 142.87,439.2 146.5,438.4 150.14,439.5 153.78,446.8 157.42,443.4 161.06,443.4 164.7,441.1 168.33,441.4 171.97,439.8 175.61,437.2 179.25,441.1 182.89,443.4 186.52,435.9 190.16,438.4 193.8,435.9 197.44,440.6 201.08,435.6 204.71,437.6 208.35,437.5 211.99,437.5 215.63,435.6 219.27,437.9 222.9,438.25 226.54,438.4 230.18,441.4 233.82,435.6 237.46,437.6 241.1,435.1 244.73,437.5 248.37,438.7 252.01,437.9 255.65,438.4 259.29,439.2 262.92,442.6 266.56,442.2 270.2,440.75 273.84,439 277.48,435.6 281.11,436.7 284.75,438.25 288.39,436.7 292.03,435.6 295.67,435.3 299.3,432.2 302.94,433.6 306.58,435.6 310.22,435.9 313.86,437.2 317.5,432.5 321.13,433.6 324.77,435.1 328.41,439.5 332.05,433.25 335.69,439.5 339.32,436.7 342.96,438.7 346.6,433.6"/><text class="xl" transform="translate(30.5 487.05) scale(0.95 1)" text-anchor="start">2021-03-16</text><text class="xl" transform="translate(117 487.05) scale(0.95 1)" text-anchor="middle">2021-03-18</text><text class="xl" transform="translate(193.5 487.05) scale(0.95 1)" text-anchor="middle">2021-03-20</text><text class="xl" transform="translate(347.3 487.05) scale(0.95 1)" text-anchor="end">2021-03-23</text><circle cx="159.5" cy="496.35" r="2.7" fill="#74f261"/><circle cx="159.5" cy="496.35" r="1.05" fill="none" stroke="#fff" stroke-opacity=".35" stroke-width=".6"/><text class="lg" transform="translate(164 497.6) scale(0.93 1)" text-anchor="start">ms/Read</text><circle cx="189.25" cy="496.35" r="2.7" fill="#0a9a9a"/><circle cx="189.25" cy="496.35" r="1.05" fill="none" stroke="#fff" stroke-opacity=".35" stroke-width=".6"/><text class="lg" transform="translate(193.75 497.6) scale(0.93 1)" text-anchor="start">ms/Write</text><line class="g" x1="366" x2="672" y1="431.2" y2="431.2"/><line class="g" x1="366" x2="672" y1="443.5" y2="443.5"/><line class="g" x1="366" x2="672" y1="456" y2="456"/><line class="g" x1="366" x2="672" y1="468.4" y2="468.4"/><line class="g" x1="442.5" x2="442.5" y1="431" y2="480.8"/><line class="g" x1="519" x2="519" y1="431" y2="480.8"/><line class="g" x1="595.5" x2="595.5" y1="431" y2="480.8"/><line class="g" x1="672" x2="672" y1="431" y2="480.8"/><line x1="366" x2="674.5" y1="480.8" y2="480.8" stroke="#aaa" stroke-width="0.8"/><line x1="366" x2="366" y1="480.8" y2="482.4" stroke="#999" stroke-width=".5"/><line x1="442.5" x2="442.5" y1="480.8" y2="482.4" stroke="#999" stroke-width=".5"/><line x1="519" x2="519" y1="480.8" y2="482.4" stroke="#999" stroke-width=".5"/><line x1="672" x2="672" y1="480.8" y2="482.4" stroke="#999" stroke-width=".5"/><text class="yl" transform="translate(363.7 435.85) scale(0.87 1)" text-anchor="end">16</text><text class="yl" transform="translate(363.7 445.05) scale(0.87 1)" text-anchor="end">12</text><text class="yl" transform="translate(363.7 457.55) scale(0.87 1)" text-anchor="end">8</text><text class="yl" transform="translate(363.7 469.85) scale(0.87 1)" text-anchor="end">4</text><text class="yl" transform="translate(363.7 482.15) scale(0.87 1)" text-anchor="end">0</text><polyline fill="none" stroke="#e3aa1e" stroke-width="1.15" stroke-linejoin="round"  points="366,439 563,439 566,438.6 570,437.9 574,438.5 577,439 672,439"/><text class="xl" transform="translate(356 487.05) scale(0.95 1)" text-anchor="start">2021-03-16</text><text class="xl" transform="translate(442.5 487.05) scale(0.95 1)" text-anchor="middle">2021-03-18</text><text class="xl" transform="translate(519 487.05) scale(0.95 1)" text-anchor="middle">2021-03-20</text><text class="xl" transform="translate(672.6 487.05) scale(0.95 1)" text-anchor="end">2021-03-23</text><circle cx="496.25" cy="496.35" r="2.7" fill="#e0a010"/><circle cx="496.25" cy="496.35" r="1.05" fill="none" stroke="#fff" stroke-opacity=".35" stroke-width=".6"/><text class="lg" transform="translate(500.75 497.6) scale(0.93 1)" text-anchor="start">Log Flushes</text><line class="g" x1="691.25" x2="981" y1="431.2" y2="431.2"/><line class="g" x1="691.25" x2="981" y1="443.5" y2="443.5"/><line class="g" x1="691.25" x2="981" y1="456" y2="456"/><line class="g" x1="691.25" x2="981" y1="468.4" y2="468.4"/><line class="g" x1="767.75" x2="767.75" y1="431" y2="480.8"/><line class="g" x1="844.25" x2="844.25" y1="431" y2="480.8"/><line class="g" x1="920.75" x2="920.75" y1="431" y2="480.8"/><line class="g" x1="981" x2="981" y1="431" y2="480.8"/><text class="yl" transform="translate(689.8 435.85) scale(0.87 1)" text-anchor="end">0.008</text><text class="yl" transform="translate(689.8 445.05) scale(0.87 1)" text-anchor="end">0.006</text><text class="yl" transform="translate(689.8 457.55) scale(0.87 1)" text-anchor="end">0.004</text><text class="yl" transform="translate(689.8 469.85) scale(0.87 1)" text-anchor="end">0.002</text><text class="yl" transform="translate(689.8 482.15) scale(0.87 1)" text-anchor="end">0</text><text class="yl" transform="translate(985.3 435.85) scale(0.87 1)" text-anchor="start">4</text><text class="yl" transform="translate(985.3 445.05) scale(0.87 1)" text-anchor="start">3</text><text class="yl" transform="translate(985.3 457.55) scale(0.87 1)" text-anchor="start">2</text><text class="yl" transform="translate(985.3 469.85) scale(0.87 1)" text-anchor="start">1</text><text class="yl" transform="translate(985.3 482.15) scale(0.87 1)" text-anchor="start">0</text><polyline fill="none" stroke="#c47a0a" stroke-width="1.05" stroke-linejoin="round"  points="691.25,480.6 694.7,480.6 698.15,480.6 701.6,480.6 705.05,480.6 708.5,480.6 711.95,448.1 715.4,479.6 718.85,470.4 722.29,480.6 725.74,480.6 729.19,480.6 732.64,480.6 736.09,480.6 739.54,480.6 742.99,480.6 746.44,480.6 749.89,480.6 753.34,443.1 756.79,479.6 760.24,470.4 763.69,480.6 767.14,480.6 770.59,480.6 774.04,480.6 777.49,480.6 780.93,480.6 784.38,480.6 787.83,480.6 791.28,480.6 794.73,447.3 798.18,479.6 801.63,467.6 805.08,480.6 808.53,480.6 811.98,480.6 815.43,480.6 818.88,480.6 822.33,480.6 825.78,480.6 829.23,480.6 832.68,480.6 836.12,448.1 839.57,479.6 843.02,470.4 846.47,480.6 849.92,480.6 853.37,480.6 856.82,480.6 860.27,480.6 863.72,480.6 867.17,480.6 870.62,480.6 874.07,480.6 877.52,443.4 880.97,479.6 884.42,472.3 887.87,480.6 891.32,480.6 894.76,480.6 898.21,480.6 901.66,480.6 905.11,480.6 908.56,480.6 912.01,480.6 915.46,480.6 918.91,444.2 922.36,479.6 925.81,471 929.26,480.6 932.71,480.6 936.16,480.6 939.61,480.6 943.06,480.6 946.51,480.6 949.96,480.6 953.4,480.6 956.85,480.6 960.3,444.7 963.75,479.6 967.2,470.4 970.65,480.6 974.1,480.6 977.55,480.6 981,480.6"/><polyline fill="none" stroke="#ffe48c" stroke-width="1.5" stroke-linejoin="round"  points="691.25,480.8 981,480.8"/><line x1="981" x2="984" y1="480.8" y2="480.8" stroke="#aaa" stroke-width="0.5"/><text class="xl" transform="translate(681.5 487.05) scale(0.95 1)" text-anchor="start">2021-03-16</text><text class="xl" transform="translate(767.5 487.05) scale(0.95 1)" text-anchor="middle">2021-03-18</text><text class="xl" transform="translate(843.8 487.05) scale(0.95 1)" text-anchor="middle">2021-03-20</text><text class="xl" transform="translate(980.8 487.05) scale(0.95 1)" text-anchor="middle">2021-03-23</text><circle cx="797.5" cy="496.35" r="2.7" fill="#b8650f"/><circle cx="797.5" cy="496.35" r="1.05" fill="none" stroke="#fff" stroke-opacity=".35" stroke-width=".6"/><text class="lg" transform="translate(802 497.6) scale(0.93 1)" text-anchor="start">Checkpoint Pages</text><circle cx="846.75" cy="496.35" r="2.7" fill="#ffd37a"/><circle cx="846.75" cy="496.35" r="1.05" fill="none" stroke="#fff" stroke-opacity=".35" stroke-width=".6"/><text class="lg" transform="translate(851.25 497.6) scale(0.93 1)" text-anchor="start">Lazy Writes</text></svg></div>
</div></body></html>
